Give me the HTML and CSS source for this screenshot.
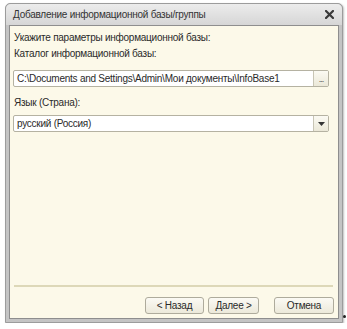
FILE: index.html
```html
<!DOCTYPE html>
<html lang="ru">
<head>
    <meta charset="UTF-8">
    <title>Добавление информационной базы/группы</title>
    <link rel="stylesheet" href="styles.css">
</head>
<body>
    <div class="window">
        <div class="titlebar">
            <span class="title">Добавление информационной базы/группы</span>
            <svg class="close" width="9" height="9" viewBox="0 0 9 9">
                <path d="M1 1 L8 8 M8 1 L1 8" stroke="#3a3a3a" stroke-width="2.2" stroke-linecap="square"/>
            </svg>
        </div>
        <div class="content">
            <div class="label first">Укажите параметры информационной базы:</div>
            <div class="label second">Каталог информационной базы:</div>
            <div class="field path">
                <span class="value">C:\Documents and Settings\Admin\Мои документы\InfoBase1</span>
                <span class="btn-side">...</span>
            </div>
            <div class="label lang">Язык (Страна):</div>
            <div class="field combo">
                <span class="value">русский (Россия)</span>
                <span class="btn-side">
                    <svg width="7" height="4" viewBox="0 0 7 4"><path d="M0 0 H7 L3.5 4 Z" fill="#333"/></svg>
                </span>
            </div>
            <div class="spacer"></div>
            <div class="separator"></div>
            <div class="buttons">
                <button class="back">&lt; Назад</button>
                <button class="next">Далее &gt;</button>
                <button class="cancel">Отмена</button>
            </div>
        </div>
    </div>
    <div class="dot"></div>
</body>
</html>
```

FILE: styles.css
```css
body {
    margin: 0;
    background: #ffffff;
    font-family: "Liberation Sans", Arial, sans-serif;
    font-size: 10px;
    letter-spacing: -0.25px;
    color: #2a2a2a;
}
.window {
    margin: 3px 0 0 5px;
    width: 338px;
    height: 320px;
    border: 1px solid #9c9c9c;
    border-radius: 5px 5px 0 0;
    background: #c4c4c4;
    padding: 0 3px 3px 3px;
    box-sizing: border-box;
    display: flex;
    flex-direction: column;
    box-shadow: 1px 1px 2px rgba(0,0,0,0.25);
}
.titlebar {
    height: 21px;
    margin: 0 -3px;
    padding: 0 8px 0 7px;
    background: linear-gradient(#ececec, #d6d6d6);
    border-radius: 5px 5px 0 0;
    display: flex;
    align-items: center;
    justify-content: space-between;
}
.title {
    font-size: 10px;
    color: #333;
}
.content {
    flex: 1;
    background: #fcf9e9;
    border: 1px solid #8e8e8e;
    padding: 0 9px 0 3px;
    display: flex;
    flex-direction: column;
}
.label {
    line-height: 15px;
    padding-left: 1px;
}
.label.first {
    margin-top: 4px;
}
.label.second {
    margin-top: 1px;
}
.label.lang {
    margin-top: 8px;
}
.field {
    height: 17px;
    margin-top: 9px;
    background: #ffffff;
    border: 1px solid #b5b2a2;
    border-radius: 2px;
    box-sizing: border-box;
    display: flex;
    align-items: center;
}
.field.combo {
    margin-top: 5px;
}
.value {
    flex: 1;
    padding-left: 3px;
    white-space: nowrap;
    overflow: hidden;
}
.btn-side {
    width: 14px;
    height: 100%;
    border-left: 1px solid #c8c5b5;
    background: linear-gradient(#fbfaf3, #ebe8d8);
    display: flex;
    align-items: center;
    justify-content: center;
    font-size: 9px;
    color: #555;
    letter-spacing: -1px;
}
.spacer {
    flex: 1;
}
.separator {
    height: 2px;
    background: #ddd8b8;
    margin: 0 -4px 0 1px;
}
.buttons {
    display: flex;
    justify-content: flex-end;
    margin: 10px -5px 4px 0;
}
button {
    height: 17px;
    font-family: "Liberation Sans", Arial, sans-serif;
    font-size: 10px;
    letter-spacing: -0.25px;
    color: #2a2a2a;
    background: linear-gradient(#fbfaf4, #ece9da);
    border: 1px solid #aeab9c;
    border-radius: 3px;
    padding: 0;
}
.back {
    width: 59px;
}
.next {
    width: 51px;
    margin-left: 4px;
}
.cancel {
    width: 60px;
    margin-left: 15px;
}
.dot {
    position: absolute;
    left: 343px;
    top: 315px;
    width: 3px;
    height: 3px;
    border-radius: 50%;
    background: #222;
}
```
